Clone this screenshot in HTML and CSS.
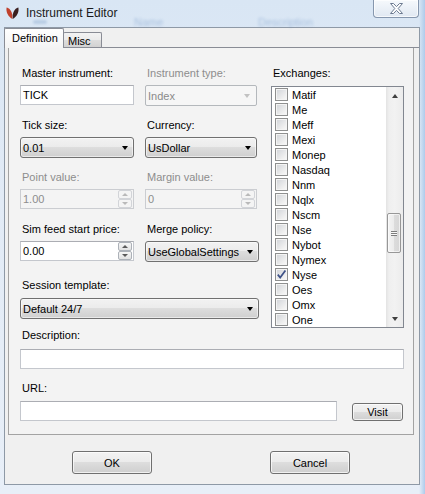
FILE: index.html
```html
<!DOCTYPE html>
<html>
<head>
<meta charset="utf-8">
<link rel="stylesheet" href="styles.css">
</head>
<body>
<div class="window">
  <div class="titlebar">
    <span class="ghost-blob"></span>
    <span class="ghost g2">Name</span>
    <span class="ghost g3">Description</span>
    <svg class="app-icon" width="15" height="14" viewBox="0 0 15 14">
      <path d="M7.3 13 C3 10.5 0.8 6.5 1.6 1.6 C4 1.8 6.6 4.8 7.3 9 Z" fill="#c0402c"/>
      <path d="M7.7 13 C12 10.5 14.2 6.5 13.4 1.6 C11 1.8 8.4 4.8 7.7 9 Z" fill="#3b1f1f"/>
    </svg>
    <span class="title">Instrument Editor</span>
    <div class="close">
      <svg width="13" height="11" viewBox="0 0 13 11">
        <polygon points="0.5,0.5 3.5,0.5 6.5,3.6 9.5,0.5 12.5,0.5 8.2,5.5 12.5,10.5 9.5,10.5 6.5,7.4 3.5,10.5 0.5,10.5 4.8,5.5" fill="#ffffff" stroke="#6c7a90" stroke-width="1"/>
      </svg>
    </div>
  </div>

  <div class="client">
    <div class="tabs">
      <div class="tab active">Definition</div>
      <div class="tab misc">Misc</div>
    </div>
    <div class="page">
      <div class="panel">
        <div class="top">
          <div class="fields">
            <div class="row">
              <div class="cell">
                <div class="lbl">Master instrument:</div>
                <div class="textbox">TICK</div>
              </div>
              <div class="cell">
                <div class="lbl dis">Instrument type:</div>
                <div class="combo disabled w112">Index<span class="arrow"></span></div>
              </div>
            </div>
            <div class="row r2">
              <div class="cell">
                <div class="lbl">Tick size:</div>
                <div class="combo">0.01<span class="arrow"></span></div>
              </div>
              <div class="cell">
                <div class="lbl">Currency:</div>
                <div class="combo w112">UsDollar<span class="arrow"></span></div>
              </div>
            </div>
            <div class="row r3">
              <div class="cell">
                <div class="lbl dis">Point value:</div>
                <div class="textbox numeric disabled">1.00<span class="spin"><span class="s-up"></span><span class="s-down"></span></span></div>
              </div>
              <div class="cell">
                <div class="lbl dis">Margin value:</div>
                <div class="textbox numeric disabled w112">0<span class="spin"><span class="s-up"></span><span class="s-down"></span></span></div>
              </div>
            </div>
            <div class="row r4">
              <div class="cell">
                <div class="lbl">Sim feed start price:</div>
                <div class="textbox numeric">0.00<span class="spin"><span class="s-up"></span><span class="s-down"></span></span></div>
              </div>
              <div class="cell">
                <div class="lbl">Merge policy:</div>
                <div class="combo">UseGlobalSettings<span class="arrow"></span></div>
              </div>
            </div>
            <div class="row r5">
              <div class="cell wide">
                <div class="lbl">Session template:</div>
                <div class="combo">Default 24/7<span class="arrow"></span></div>
              </div>
            </div>
          </div>

          <div class="exchanges">
            <div class="lbl">Exchanges:</div>
            <div class="listbox">
              <div class="items">
                <div class="item"><span class="cb"></span>Matif</div>
                <div class="item"><span class="cb"></span>Me</div>
                <div class="item"><span class="cb"></span>Meff</div>
                <div class="item"><span class="cb"></span>Mexi</div>
                <div class="item"><span class="cb"></span>Monep</div>
                <div class="item"><span class="cb"></span>Nasdaq</div>
                <div class="item"><span class="cb"></span>Nnm</div>
                <div class="item"><span class="cb"></span>Nqlx</div>
                <div class="item"><span class="cb"></span>Nscm</div>
                <div class="item"><span class="cb"></span>Nse</div>
                <div class="item"><span class="cb"></span>Nybot</div>
                <div class="item"><span class="cb"></span>Nymex</div>
                <div class="item"><span class="cb checked"><svg width="11" height="11" viewBox="0 0 11 11"><path d="M1.8 5.6 L4.2 8.6 L9.4 1.6" fill="none" stroke="#3d5187" stroke-width="1.7"/></svg></span>Nyse</div>
                <div class="item"><span class="cb"></span>Oes</div>
                <div class="item"><span class="cb"></span>Omx</div>
                <div class="item"><span class="cb"></span>One</div>
              </div>
              <div class="scroll">
                <div class="sb-btn"><span class="tri-up"></span></div>
                <div class="track"><div class="thumb"><span class="grip"></span></div></div>
                <div class="sb-btn"><span class="tri-down"></span></div>
              </div>
            </div>
          </div>
        </div>

        <div class="lbl desc-lbl">Description:</div>
        <div class="textbox desc"></div>
        <div class="lbl url-lbl">URL:</div>
        <div class="url-row">
          <div class="textbox url"></div>
          <div class="btn visit">Visit</div>
        </div>
      </div>
      <div class="footer">
        <div class="btn ok">OK</div>
        <div class="btn cancel">Cancel</div>
      </div>
    </div>
  </div>
</div>
</body>
</html>
```

FILE: styles.css
```css
* { box-sizing: border-box; }
html, body { margin: 0; padding: 0; }
body {
  width: 425px;
  height: 494px;
  overflow: hidden;
  font-family: "Liberation Sans", Arial, sans-serif;
  font-size: 11px;
  color: #000;
  background:
    linear-gradient(to right, rgba(176, 204, 234, 0) 419px, #aecbeb 425px),
    linear-gradient(#d9e6f4, #e2ebf6 40%, #e8eff8);
}
.window { width: 425px; height: 494px; }

/* title bar */
.titlebar {
  position: relative;
  height: 27px;
  display: flex;
  align-items: flex-start;
}
.ghost {
  position: absolute;
  top: 16px;
  font-size: 11px;
  color: #6a90c2;
  opacity: 0.45;
  filter: blur(1.4px);
}
.ghost-blob {
  position: absolute;
  left: 33px;
  top: 20px;
  width: 14px;
  height: 4px;
  border-radius: 2px;
  background: #7f9fc8;
  opacity: 0.35;
  filter: blur(1.2px);
}
.g2 { left: 134px; }
.g3 { left: 258px; }
.app-icon { margin: 6px 0 0 5px; position: relative; }
.title {
  position: relative;
  margin: 6px 0 0 6px;
  font-size: 12px;
  line-height: 14px;
  color: #1a1a1a;
}
.close {
  margin-left: auto;
  margin-right: 6px;
  width: 46px;
  height: 18px;
  border: 1px solid #8697ae;
  border-top: none;
  border-radius: 0 0 4px 4px;
  background: linear-gradient(#f6f9fc, #e0e8f2);
  box-shadow: inset 0 0 0 1px rgba(255, 255, 255, 0.7);
  display: flex;
  align-items: center;
  justify-content: center;
}

/* client */
.client {
  margin-left: 4px;
  width: 416px;
  height: 458px;
  border: 1px solid #8e99a6;
  background: #f0f0f0;
  display: flex;
  flex-direction: column;
}
.tabs {
  display: flex;
  align-items: flex-end;
  height: 20px;
  margin-left: -1px;
}
.tab {
  font-size: 11px;
  border: 1px solid #898c95;
  border-bottom: none;
  border-radius: 2px 2px 0 0;
  display: flex;
  align-items: center;
}
.tab.active {
  height: 20px;
  width: 60px;
  padding: 0 0 1px 7px;
  background: linear-gradient(#ffffff, #f4f4f4);
  position: relative;
  z-index: 2;
}
.tab.misc {
  height: 16px;
  width: 39px;
  margin-left: -1px;
  padding-left: 4px;
  background: linear-gradient(#f3f3f3, #ebebeb 50%, #dddddd 50%, #d0d0d0);
}
.page {
  margin-top: -1px;
  border-top: 1px solid #898c95;
  position: relative;
  z-index: 1;
  flex: 1;
  display: flex;
  flex-direction: column;
}
.panel {
  margin: 0 5px 0 3px;
  height: 387px;
  border: 1px solid #a3a3a3;
  border-top: none;
  background: #f3f3f3;
}

/* field layout */
.top { display: flex; align-items: flex-start; }
.fields { padding: 19px 0 0 11px; width: 250px; }
.row { display: flex; gap: 11px; }
.r2 { margin-top: 13px; }
.r3 { margin-top: 13px; }
.r4 { margin-top: 14px; }
.r5 { margin-top: 17px; }
.cell { width: 114px; }
.cell.wide { width: 239px; }
.r5 .lbl { margin-bottom: 6px; }

.lbl {
  height: 13px;
  line-height: 13px;
  padding-left: 2px;
  margin-bottom: 5px;
  white-space: nowrap;
}
.lbl.dis { color: #8d8d8d; }

/* textbox */
.textbox {
  height: 20px;
  border: 1px solid #c4c7cd;
  border-top-color: #abadb3;
  background: #fff;
  padding-left: 2px;
  display: flex;
  align-items: center;
  white-space: nowrap;
}
.w112 { width: 112px; }
.numeric { padding-right: 1px; }
.numeric.disabled {
  background: #f4f4f4;
  border-color: #cbcdd1;
  color: #8d8d8d;
}
.spin {
  margin-left: auto;
  width: 14px;
  height: 18px;
  display: flex;
  flex-direction: column;
}
.spin span {
  flex: 1;
  border: 1px solid #acb1b8;
  border-radius: 2px;
  background: linear-gradient(#f6f6f6, #e2e2e2);
  display: flex;
  align-items: center;
  justify-content: center;
}
.spin .s-up::before {
  content: "";
  border-left: 3px solid transparent;
  border-right: 3px solid transparent;
  border-bottom: 3px solid #5a5a5a;
}
.spin .s-down::before {
  content: "";
  border-left: 3px solid transparent;
  border-right: 3px solid transparent;
  border-top: 3px solid #5a5a5a;
}
.numeric.disabled .spin span {
  border-color: #d2d4d8;
  background: #f4f4f4;
}
.numeric.disabled .spin .s-up::before { border-bottom-color: #b9b9b9; }
.numeric.disabled .spin .s-down::before { border-top-color: #b9b9b9; }

/* combo */
.combo {
  height: 21px;
  border: 1px solid #707070;
  border-radius: 3px;
  background: linear-gradient(#f2f2f2, #ebebeb 50%, #dddddd 50%, #cfcfcf);
  box-shadow: inset 0 0 0 1px rgba(255, 255, 255, 0.55);
  display: flex;
  align-items: center;
  padding-left: 2px;
  white-space: nowrap;
}
.arrow {
  margin-left: auto;
  margin-right: 5px;
  width: 0;
  height: 0;
  border-left: 3.5px solid transparent;
  border-right: 3.5px solid transparent;
  border-top: 4px solid #000;
}
.combo.disabled {
  border-color: #b4b8bc;
  border-radius: 2px;
  background: #f6f6f6;
  box-shadow: none;
  color: #8a8a8a;
}
.combo.disabled .arrow { border-top-color: #c2c2c2; margin-right: 6px; }

/* exchanges */
.exchanges { margin-left: 12px; padding-top: 19px; }
.exchanges .lbl { margin-bottom: 6px; }
.listbox {
  width: 133px;
  height: 242px;
  border: 1px solid #828790;
  background: #fff;
  display: flex;
}
.items { flex: 1; }
.item {
  height: 15px;
  display: flex;
  align-items: center;
  padding-left: 3px;
  white-space: nowrap;
}
.cb {
  width: 13px;
  height: 13px;
  margin-right: 4px;
  border: 1px solid #8e8f8f;
  background: linear-gradient(135deg, #d0d3d8, #efefef 70%, #fafafa);
  box-shadow: inset 0 0 0 1px #f4f4f4;
  display: flex;
  align-items: center;
  justify-content: center;
}
.cb.checked svg { display: block; }
.scroll {
  width: 17px;
  display: flex;
  flex-direction: column;
  background: linear-gradient(to right, #e3e3e3, #efefef 3px, #f2f2f2 50%, #ececec);
}
.sb-btn {
  height: 17px;
  display: flex;
  align-items: center;
  justify-content: center;
}
.tri-up {
  border-left: 3.5px solid transparent;
  border-right: 3.5px solid transparent;
  border-bottom: 4px solid #3f3f3f;
}
.tri-down {
  border-left: 3.5px solid transparent;
  border-right: 3.5px solid transparent;
  border-top: 4px solid #3f3f3f;
}
.track { flex: 1; }
.thumb {
  margin: 109px 2px 0 1px;
  height: 40px;
  border: 1px solid #979797;
  border-radius: 2px;
  background: linear-gradient(to right, #f4f4f4, #ebebeb 50%, #dcdcdc 50%, #d6d6d6);
  box-shadow: inset 0 0 0 1px rgba(255, 255, 255, 0.6);
  display: flex;
  align-items: center;
  justify-content: center;
}
.grip {
  width: 6px;
  height: 5px;
  background: repeating-linear-gradient(#7d7d7d 0, #7d7d7d 1px, #f8f8f8 1px, #f8f8f8 2px);
}

/* lower fields */
.desc-lbl { margin: 1px 0 7px 11px; }
.textbox.desc { margin-left: 11px; width: 384px; }
.url-lbl { margin: 13px 0 6px 11px; }
.url-row { display: flex; align-items: flex-start; margin-left: 11px; }
.textbox.url { width: 317px; }

/* buttons */
.btn {
  border: 1px solid #707070;
  border-radius: 3px;
  background: linear-gradient(#f2f2f2, #ebebeb 50%, #dddddd 50%, #cfcfcf);
  box-shadow: inset 0 0 0 1px rgba(255, 255, 255, 0.7);
  display: flex;
  align-items: center;
  justify-content: center;
  font-size: 11px;
}
.visit { margin: 2px 0 0 15px; width: 51px; height: 18px; }
.footer { display: flex; padding: 16px 0 0 67px; }
.ok { width: 80px; height: 23px; }
.cancel { margin-left: 118px; width: 80px; height: 23px; }
```
